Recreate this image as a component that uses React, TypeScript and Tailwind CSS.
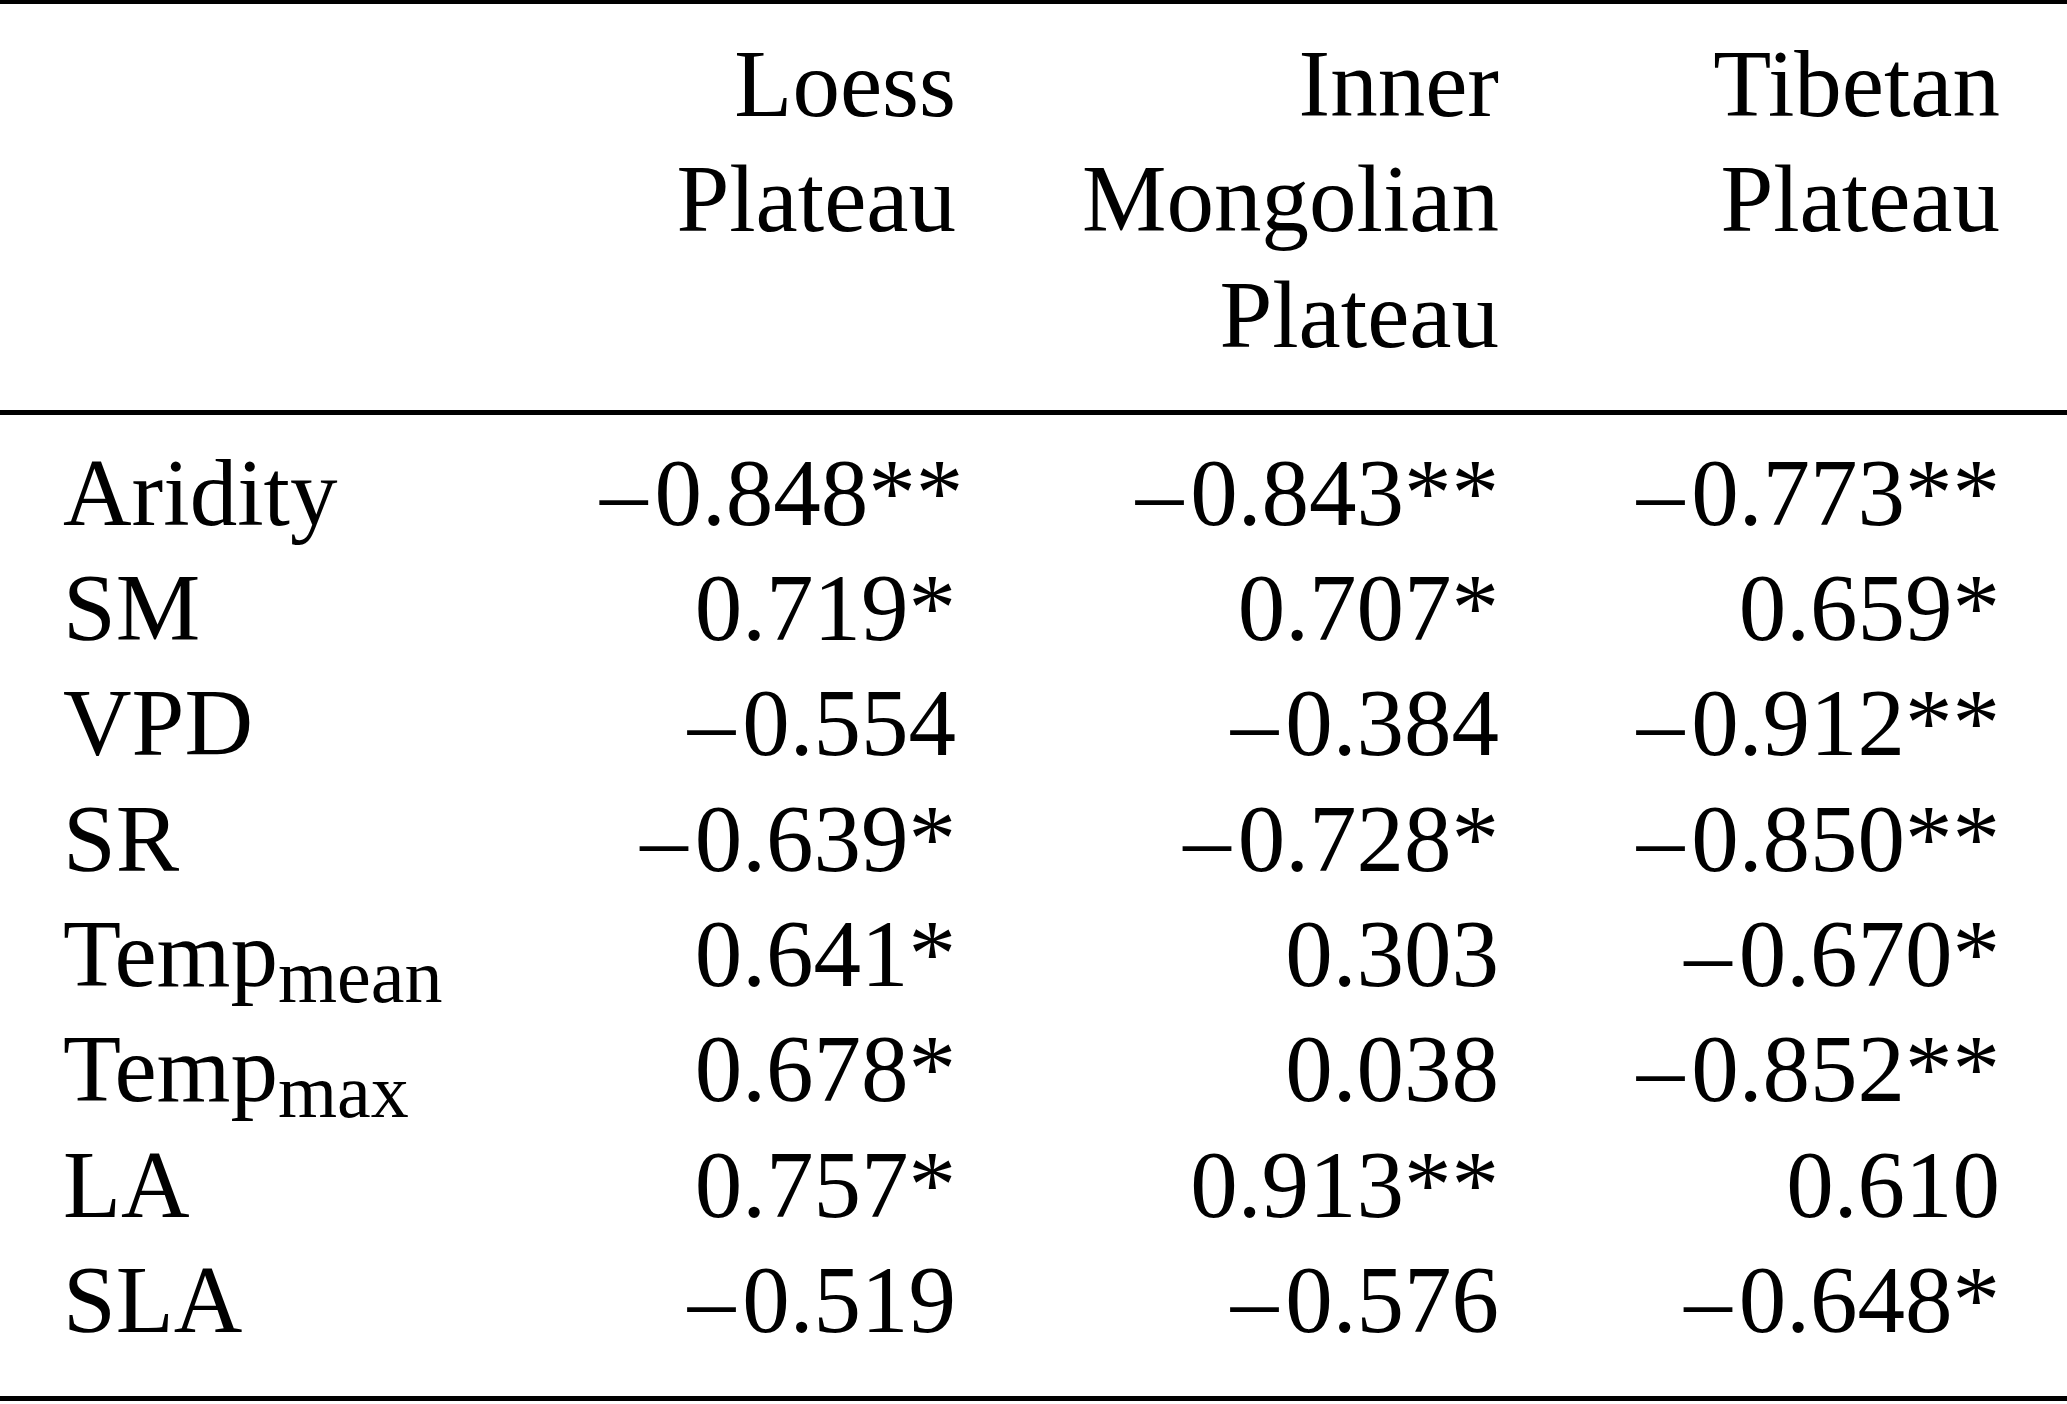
const regions = [
  ["Loess", "Plateau"],
  ["Inner", "Mongolian", "Plateau"],
  ["Tibetan", "Plateau"],
];

type Row = { label: string; sub?: string; values: string[] };

const rows: Row[] = [
  { label: "Aridity", values: ["–0.848**", "–0.843**", "–0.773**"] },
  { label: "SM", values: ["0.719*", "0.707*", "0.659*"] },
  { label: "VPD", values: ["–0.554", "–0.384", "–0.912**"] },
  { label: "SR", values: ["–0.639*", "–0.728*", "–0.850**"] },
  { label: "Temp", sub: "mean", values: ["0.641*", "0.303", "–0.670*"] },
  { label: "Temp", sub: "max", values: ["0.678*", "0.038", "–0.852**"] },
  { label: "LA", values: ["0.757*", "0.913**", "0.610"] },
  { label: "SLA", values: ["–0.519", "–0.576", "–0.648*"] },
];

const grid = "grid grid-cols-[600px_356px_543px_501px]";

// splits a leading dash off so it can get a bit of extra room, like the print version
const Value = ({ v }: { v: string }) =>
  v.startsWith("–") ? (
    <>
      <span className="tracking-[7px]">–</span>
      {v.slice(1)}
    </>
  ) : (
    <>{v}</>
  );

const App = () => {
  return (
    <div className="w-[2067px] h-[1404px] bg-white text-black font-['Liberation_Serif','Times_New_Roman',serif] text-[95px] leading-[115.3px]">
      {/* Header */}
      <div className={`${grid} border-t-[4px] border-b-[5px] border-black pt-[23px] pb-[37px]`}>
        <div />
        {regions.map((lines, i) => (
          <div key={i} className="flex flex-col items-end">
            {lines.map((l) => (
              <span key={l}>{l}</span>
            ))}
          </div>
        ))}
      </div>
      {/* Body */}
      <div className="border-b-[5px] border-black pt-[21px] pb-[38px]">
        {rows.map((r, i) => (
          <div key={i} className={grid}>
            <div className="pl-[63px] whitespace-nowrap">
              {r.label}
              {r.sub && (
                <span className="text-[76px] leading-[0] align-[-16px]">{r.sub}</span>
              )}
            </div>
            {r.values.map((v, j) => (
              <div key={j} className="text-right whitespace-nowrap">
                <Value v={v} />
              </div>
            ))}
          </div>
        ))}
      </div>
    </div>
  );
};

export default App;
